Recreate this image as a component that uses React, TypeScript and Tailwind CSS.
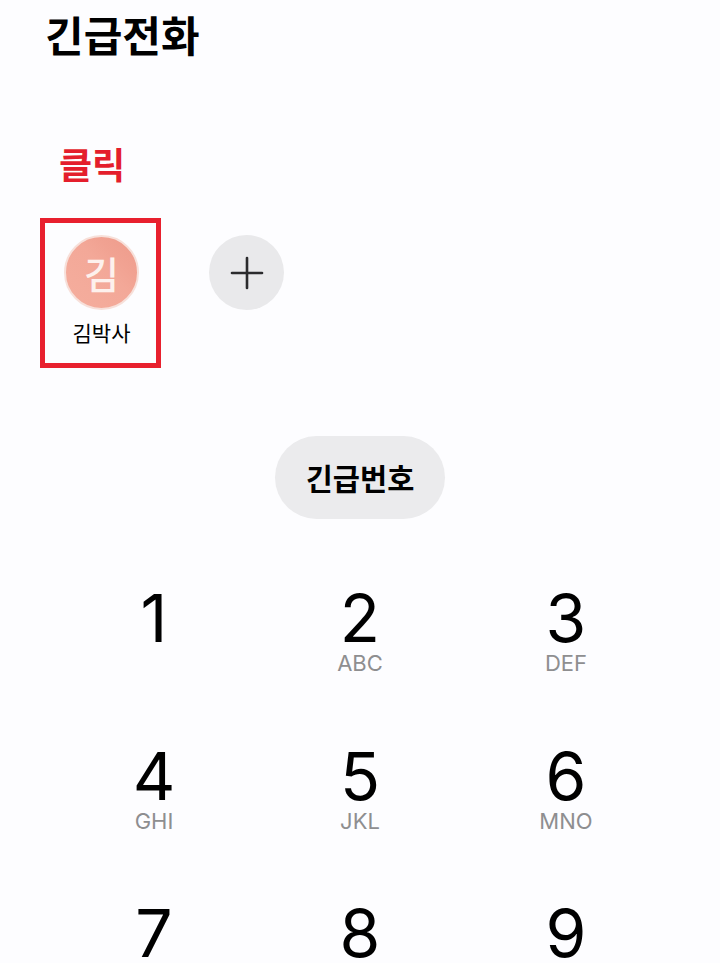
import React from 'react';

// only the part of the keypad that fits in the window, so row 3 has no letters
const keys = [
  { digit: '1', letters: '' },
  { digit: '2', letters: 'ABC' },
  { digit: '3', letters: 'DEF' },
  { digit: '4', letters: 'GHI' },
  { digit: '5', letters: 'JKL' },
  { digit: '6', letters: 'MNO' },
  { digit: '7', letters: '' },
  { digit: '8', letters: '' },
  { digit: '9', letters: '' },
];

const App: React.FC = () => {
  return (
    <div className="h-[963px] w-[720px] overflow-hidden bg-[#fdfdff] font-['Inter','Noto_Sans_CJK_KR',sans-serif] text-black">
      <h1 className="pl-[45px] pt-[6px] font-['Noto_Sans_CJK_KR',sans-serif] text-[42px] leading-[56px] font-bold">긴급전화</h1>

      <div className="mt-[78px] pl-[59px] font-['Noto_Sans_CJK_KR',sans-serif] text-[36px] leading-[46px] font-bold text-[#e41e2c]">클릭</div>

      <div className="mt-[32px] flex items-start pl-[40px]">
        <div className="flex h-[150px] w-[121px] flex-col items-center border-[5px] border-[#e8202e] pl-[2px] pt-[12px]">
          <div className="flex h-[75px] w-[75px] items-center justify-center rounded-full border-2 border-[#f7e0da] bg-[linear-gradient(45deg,#f5ae9e_0%,#f3a898_55%,#f1a292_70%,#ed9a8a_100%)] bg-origin-border font-['Noto_Sans_CJK_KR',sans-serif] text-[38px] leading-none font-medium text-[#fdf1ed]">
            김
          </div>
          <div className="mt-[8px] font-['Noto_Sans_CJK_KR',sans-serif] text-[21px] leading-[28px]">김박사</div>
        </div>
        <div className="ml-[48px] mt-[17px] flex h-[75px] w-[75px] items-center justify-center rounded-full bg-[#e9e9eb]">
          <svg width="34" height="34" viewBox="0 0 34 34" fill="none" stroke="#2b2b2d" strokeWidth="2.6" strokeLinecap="round">
            <path d="M17 2v30" />
            <path d="M2 17h30" />
          </svg>
        </div>
      </div>

      <div className="mt-[68px] flex justify-center">
        <div className="flex h-[83px] w-[170px] items-center justify-center rounded-full bg-[#ebebed] font-['Noto_Sans_CJK_KR',sans-serif] text-[29.5px] font-bold">
          긴급번호
        </div>
      </div>

      <div className="mt-[69px] grid grid-cols-3 gap-y-[47.5px] px-[51px]">
        {keys.map((k) => (
          <div key={k.digit} className="flex h-[110px] flex-col items-center">
            <div className="text-[66px] leading-[60px] font-normal">{k.digit}</div>
            <div className="mt-[3px] text-[22px] leading-[24px] text-[#8e8e90]">{k.letters}</div>
          </div>
        ))}
      </div>
    </div>
  );
};

export default App;
